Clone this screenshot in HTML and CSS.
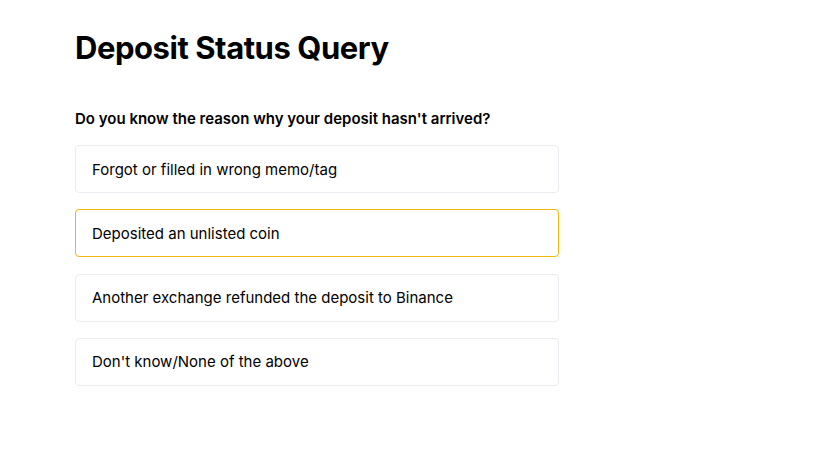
FILE: index.html
```html
<!DOCTYPE html>
<html lang="en">
<head>
<meta charset="utf-8">
<title>Deposit Status Query</title>
<link rel="stylesheet" href="styles.css">
</head>
<body>
<main class="page">
  <h1 class="title">Deposit Status Query</h1>
  <p class="question">Do you know the reason why your deposit hasn't arrived?</p>
  <ul class="options">
    <li class="option">Forgot or filled in wrong memo/tag</li>
    <li class="option option--active">Deposited an unlisted coin</li>
    <li class="option">Another exchange refunded the deposit to Binance</li>
    <li class="option">Don't know/None of the above</li>
  </ul>
</main>
</body>
</html>
```

FILE: styles.css
```css
html, body {
  margin: 0;
  padding: 0;
  background: #ffffff;
}
body {
  font-family: "Inter", "Noto Sans", sans-serif;
  color: #1e2329;
}
.page {
  width: 484px;
  padding: 28px 0 0 75px;
}
.title {
  margin: 0;
  font-size: 31px;
  line-height: 40px;
  font-weight: 700;
  color: #000;
  letter-spacing: -0.45px;
}
.question {
  margin: 39px 0 0;
  font-size: 15px;
  line-height: 24px;
  font-weight: 600;
  color: #000;
}
.options {
  list-style: none;
  margin: 14px 0 0;
  padding: 0;
  display: flex;
  flex-direction: column;
  gap: 16.34px;
}
.option {
  box-sizing: border-box;
  height: 48px;
  display: flex;
  align-items: center;
  padding: 0 16px;
  border: 1px solid #eaecef;
  border-radius: 4px;
  font-size: 15px;
  color: #000;
}
.option--active {
  border-color: #f0b90b;
}
```
